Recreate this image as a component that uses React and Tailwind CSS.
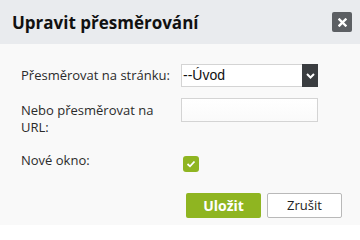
import { useState } from 'react';

const font = { fontFamily: '"Open Sans", "Noto Sans", sans-serif' };

const App = () => {
  const [newWindow, setNewWindow] = useState(true);
  const [url, setUrl] = useState('');

  return (
    <div className="w-[360px] h-[225px] overflow-hidden bg-[#f9f9f9] text-[#2b2b2b]" style={font}>
      {/* header */}
      <div className="h-[44px] bg-[#e9ebee] flex items-center justify-between pl-[12px] pr-[8px]">
        <h1 className="text-[17px] font-bold text-[#111] leading-none">Upravit přesměrování</h1>
        <button
          type="button"
          className="w-[20px] h-[20px] rounded-[2px] bg-[#5c5f63] flex items-center justify-center"
        >
          <svg width="9" height="9" viewBox="0 0 9 9">
            <path d="M1.5 1.5 L7.5 7.5 M7.5 1.5 L1.5 7.5" stroke="#fff" strokeWidth="2.4" strokeLinecap="square" />
          </svg>
        </button>
      </div>

      {/* form */}
      <div className="pt-[20px] pl-[21px] text-[13px] leading-[17px]">
        <div className="flex items-center">
          <label className="w-[160px] shrink-0 pr-[8px]">Přesměrovat na stránku:</label>
          <div className="w-[137px] h-[23px] shrink-0 flex bg-white border border-[#d4d4d4]">
            <span
              className="flex-1 pl-[1px] text-[14px] leading-[21px] text-[#111]"
              style={{ fontFamily: '"Liberation Sans", Arial, sans-serif' }}
            >
              --Úvod
            </span>
            <span className="w-[16px] -my-[1px] -mr-[1px] bg-[#3a3d40] flex items-center justify-center">
              <svg width="9" height="6" viewBox="0 0 9 6">
                <path d="M1 1 L4.5 4.5 L8 1" fill="none" stroke="#fff" strokeWidth="2" />
              </svg>
            </span>
          </div>
        </div>

        <div className="flex items-start mt-[11px]">
          <label className="w-[160px] shrink-0 pr-[8px] pt-[4px]">Nebo přesměrovat na URL:</label>
          <input
            value={url}
            onChange={(e) => setUrl(e.target.value)}
            className="w-[137px] h-[24px] shrink-0 bg-gradient-to-b from-white to-[#fafafa] border border-[#d4d4d4] outline-none px-1"
          />
        </div>

        <div className="flex items-start mt-[16px]">
          <label className="w-[162px] shrink-0">Nové okno:</label>
          <button
            type="button"
            onClick={() => setNewWindow(!newWindow)}
            className={`mt-[4px] w-[16px] h-[16px] shrink-0 rounded-[3px] flex items-center justify-center ${newWindow ? 'bg-[#8fb521]' : 'bg-white border border-[#ccc]'}`}
          >
            {newWindow && (
              <svg width="10" height="8" viewBox="0 0 10 8">
                <path d="M1.5 4 L4 6.3 L8.5 1.5" fill="none" stroke="#fff" strokeWidth="1.8" />
              </svg>
            )}
          </button>
        </div>

        <div className="flex justify-end gap-[6px] pr-[18px] mt-[21px]">
          <button
            type="button"
            className="w-[75px] h-[25px] rounded-[2px] bg-[#8fb521] text-white text-[14px] font-bold leading-none"
          >
            Uložit
          </button>
          <button
            type="button"
            className="w-[75px] h-[25px] rounded-[2px] bg-white border border-[#b9b9b9] text-[#222] text-[13px] leading-none"
          >
            Zrušit
          </button>
        </div>
      </div>
    </div>
  );
};

export default App;
